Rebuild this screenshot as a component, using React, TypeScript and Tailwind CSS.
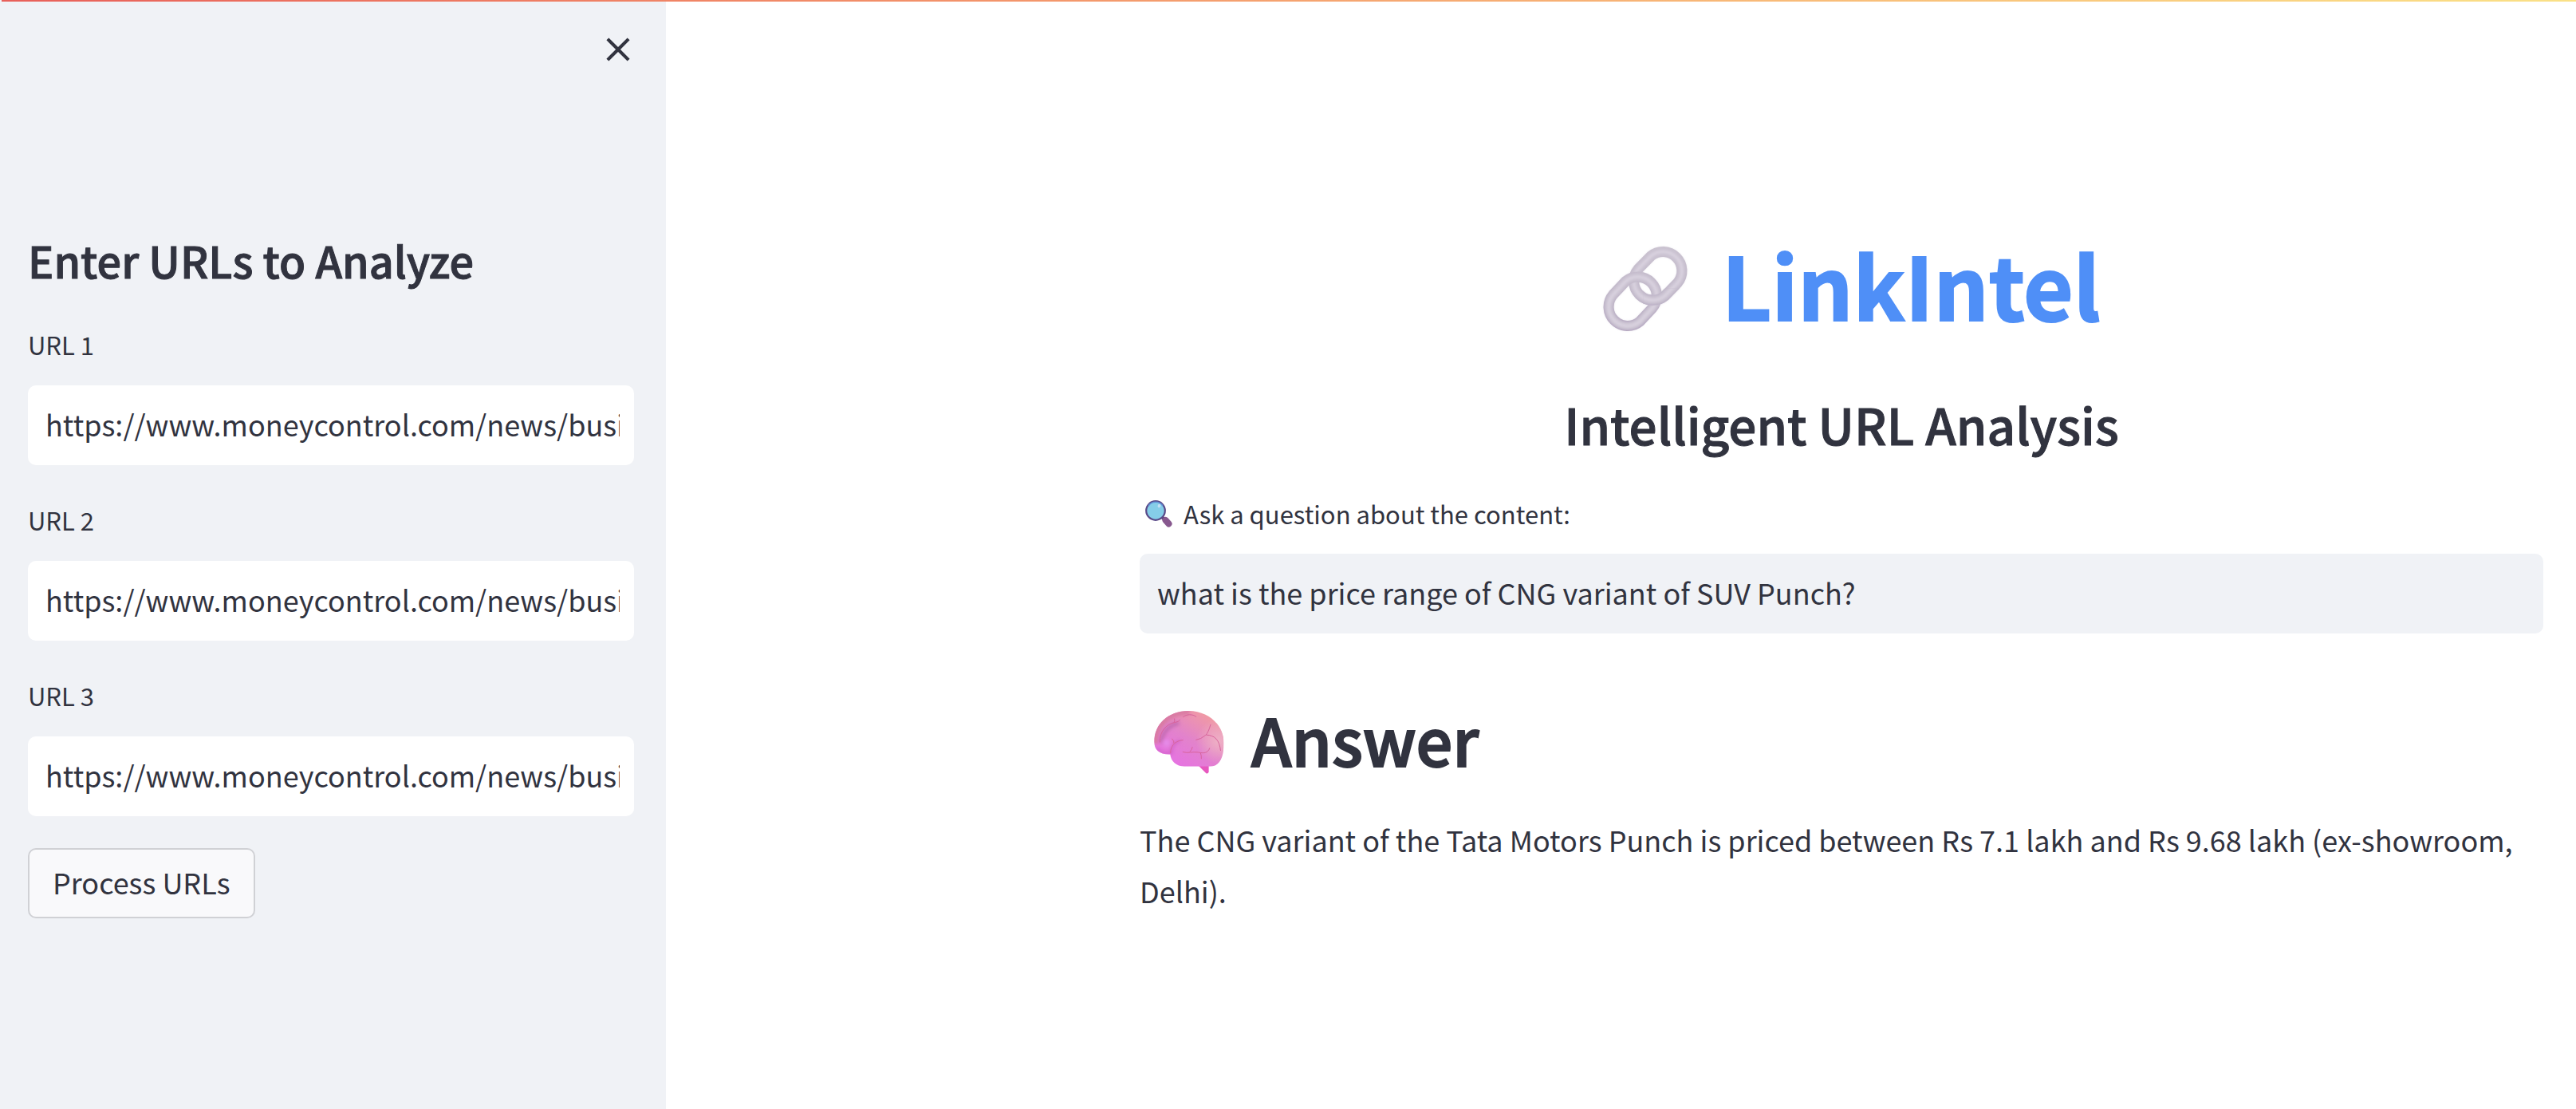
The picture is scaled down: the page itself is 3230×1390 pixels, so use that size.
import React, { useState } from "react";

const ARTICLE_URL = "https://www.moneycontrol.com/news/business/markets/";

function CloseIcon() {
  return (
    <svg viewBox="0 0 24 24" className="size-[50px] fill-current" aria-hidden="true">
      <path d="M19 6.41 17.59 5 12 10.59 6.41 5 5 6.41 10.59 12 5 17.59 6.41 19 12 13.41 17.59 19 19 17.59 13.41 12z" />
    </svg>
  );
}

const UPPER_LINK = "M269 124A71 71 0 0 1 369 224L322 272A71 71 0 0 1 222 172Z";
const LOWER_LINK = "M175 218A71 71 0 0 1 275 318L228 368A71 71 0 0 1 128 268Z";

function ChainRing({ d }: { d: string }) {
  return (
    <g fill="none">
      <path d={d} stroke="url(#ringBase)" strokeWidth="39" />
      <path d={d} stroke="#cac2d1" strokeWidth="32" filter="url(#ringSoft)" />
      <path d={d} stroke="#d9d2df" strokeWidth="12" filter="url(#ringSoft)" />
    </g>
  );
}

function LinkEmoji() {
  return (
    <svg viewBox="86 82 325 328" className="size-[110px]" role="img" aria-label="Link">
      <defs>
        <linearGradient id="ringBase" x1="0" y1="84" x2="0" y2="408" gradientUnits="userSpaceOnUse">
          <stop offset="0" stopColor="#cbc4d0" />
          <stop offset="0.55" stopColor="#beb4c7" />
          <stop offset="1" stopColor="#ae9fbc" />
        </linearGradient>
        <filter id="ringSoft" x="-20%" y="-20%" width="140%" height="140%">
          <feGaussianBlur stdDeviation="5" />
        </filter>
        <clipPath id="ringFront">
          <rect x="240" y="245" width="180" height="80" />
        </clipPath>
      </defs>
      <ChainRing d={UPPER_LINK} />
      <ChainRing d={LOWER_LINK} />
      <g clipPath="url(#ringFront)">
        <ChainRing d={UPPER_LINK} />
      </g>
    </svg>
  );
}

function BrainEmoji() {
  return (
    <svg viewBox="81 90 265 239" className="h-[79px] w-[88px]" role="img" aria-label="Brain">
      <defs>
        <linearGradient id="brainBase" x1="170" y1="300" x2="290" y2="110" gradientUnits="userSpaceOnUse">
          <stop offset="0" stopColor="#e673e2" />
          <stop offset="0.5" stopColor="#e283cb" />
          <stop offset="1" stopColor="#f09aa4" />
        </linearGradient>
        <radialGradient id="brainRight" cx="325" cy="205" r="85" gradientUnits="userSpaceOnUse">
          <stop offset="0" stopColor="#eeb0c6" />
          <stop offset="1" stopColor="#eeb0c6" stopOpacity="0" />
        </radialGradient>
        <filter id="brainSoft" x="-30%" y="-30%" width="160%" height="160%">
          <feGaussianBlur stdDeviation="7" />
        </filter>
        <clipPath id="brainShape">
          <path d="M142 255C100 256 81 236 81 208C82 140 132 91 212 90C290 91 345 145 345 212C345 268 330 300 292 301H195C165 300 144 281 142 255Z" />
        </clipPath>
      </defs>
      <path d="M250 299H288V321Q286 330 278 327Z" fill="#e758bf" />
      <g clipPath="url(#brainShape)">
        <rect x="81" y="90" width="265" height="212" fill="url(#brainBase)" />
        <rect x="81" y="90" width="265" height="212" fill="url(#brainRight)" />
        <path d="M84 215C80 140 140 92 215 92" fill="none" stroke="#d97ba3" strokeWidth="26" filter="url(#brainSoft)" />
        <path d="M108 212C110 170 140 142 176 136" fill="none" stroke="#c26bb0" strokeWidth="14" filter="url(#brainSoft)" />
        <path d="M90 232C105 254 130 250 146 250C146 225 160 208 180 203" fill="none" stroke="#d060c8" strokeWidth="9" filter="url(#brainSoft)" />
        <circle cx="128" cy="212" r="14" fill="#e58ae8" filter="url(#brainSoft)" />
      </g>
      <g fill="none" stroke="#d8639b" strokeWidth="3" strokeLinecap="round">
        <path d="M102 208C102 165 130 138 160 134Q174 132 179 124M158 120Q160 128 157 133" />
        <path d="M191 113C204 102 226 101 240 112" />
        <path d="M295 142Q287 172 276 182Q258 198 240 200M279 181C312 183 328 200 333 240" />
        <path d="M190 201C170 201 142 216 143 250M149 196Q158 205 156 212" />
        <path d="M190 246C210 252 225 244 248 247C268 252 286 250 291 232M226 228Q224 238 217 244M257 250Q261 260 260 271" />
      </g>
    </svg>
  );
}

function MagnifierEmoji() {
  return (
    <svg viewBox="0 0 34 34" className="size-[34px]" role="img" aria-label="Search">
      <path d="M21 21L25 25" stroke="#5f4478" strokeWidth="4" />
      <path d="M25.500 25L29.500 29.500" stroke="#87588e" strokeWidth="8" strokeLinecap="round" />
      <circle cx="13" cy="13" r="11.800" fill="#85cde8" stroke="#5a4a88" strokeWidth="2.200" />
      <path d="M4 7A11 11 0 0 1 22 7" fill="none" stroke="#5f8fd6" strokeWidth="1.500" />
      <ellipse cx="17.500" cy="7" rx="1.800" ry="2.200" fill="#c3e0f5" transform="rotate(30 17.500 7)" />
    </svg>
  );
}

function UrlField({ index }: { index: number }) {
  const [value, setValue] = useState(ARTICLE_URL);
  const id = `url-${index}`;
  return (
    <div className="flex flex-col">
      <label htmlFor={id} className="text-[31px] leading-[58px]">
        URL {index}
      </label>
      <input
        id={id}
        type="text"
        value={value}
        onChange={(e) => setValue(e.target.value)}
        className="mt-[22px] h-[100px] w-full rounded-[10px] border-0 bg-white pr-[18px] pb-1 pl-[22px] text-[36px] outline-none"
      />
    </div>
  );
}

export default function App() {
  const [question, setQuestion] = useState("what is the price range of CNG variant of SUV Punch?");

  return (
    <div className="relative flex min-h-screen bg-white font-['Noto_Sans_CJK_SC',sans-serif] text-[#31333f]">
      <div className="absolute inset-x-0 top-0 ml-[2px] h-[2px] bg-linear-to-r from-[#e8605a] to-[#fae187]" />

      <aside className="w-[835px] shrink-0 bg-[#f0f2f6] pr-[40px] pl-[35px]">
        <div className="flex h-[290px] items-start justify-end pt-[37px]">
          <button type="button" aria-label="Close sidebar" className="-mr-[5px]">
            <CloseIcon />
          </button>
        </div>
        <h2 className="text-[54px] leading-[72px] font-medium [-webkit-text-stroke:1px_currentColor]">
          Enter URLs to Analyze
        </h2>
        <form className="mt-[41px] flex flex-col gap-10" onSubmit={(e) => e.preventDefault()}>
          <UrlField index={1} />
          <UrlField index={2} />
          <UrlField index={3} />
          <button
            type="submit"
            className="h-[88px] self-start rounded-[10px] border-2 border-[#d0d1d5] bg-[#f9f9fb] px-[29px] pb-1 text-[36px]"
          >
            Process URLs
          </button>
        </form>
      </aside>

      <main className="flex min-w-0 flex-1 justify-end pr-[41px] pl-[41px]">
        <div className="w-full max-w-[1760px]">
          <h1 className="mt-[290px] flex items-center justify-center gap-[41px] pl-6 text-[108px] leading-[144px] font-bold text-[#4f8ff7]">
            <LinkEmoji />
            <span className="pb-[14px] leading-[130px] [-webkit-text-stroke:2px_currentColor]">LinkIntel</span>
          </h1>
          <h2 className="mt-[55px] text-center text-[62px] leading-[84px] font-medium [-webkit-text-stroke:1px_currentColor]">
            Intelligent URL Analysis
          </h2>
          <label htmlFor="question" className="mt-[41px] flex items-center gap-[14px] pl-[7px] text-[31px] leading-[60px]">
            <MagnifierEmoji />
            Ask a question about the content:
          </label>
          <input
            id="question"
            type="text"
            value={question}
            onChange={(e) => setQuestion(e.target.value)}
            className="mt-5 h-[100px] w-full rounded-[10px] border-0 bg-[#f0f2f6] px-[22px] pb-1 text-[36px] outline-none"
          />
          <h2 className="mt-[82px] flex items-center gap-[34px] pl-[18px] text-[81px] leading-[108px] font-medium">
            <BrainEmoji />
            <span className="pb-2 leading-[100px] [-webkit-text-stroke:2px_currentColor]">Answer</span>
          </h2>
          <p className="mt-[36px] text-[36px] leading-[64px]">
            The CNG variant of the Tata Motors Punch is priced between Rs 7.1 lakh and Rs 9.68 lakh (ex-showroom, Delhi).
          </p>
        </div>
      </main>
    </div>
  );
}
